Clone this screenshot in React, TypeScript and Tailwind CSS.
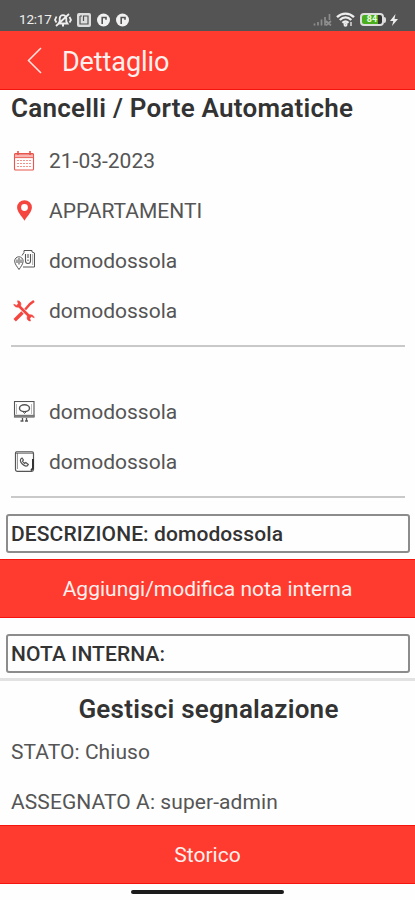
import type { ReactNode } from "react";

const RED = "#ff3b30";

function CalendarIcon() {
  return (
    <svg width="22" height="22" viewBox="0 0 22 22" fill="none" stroke="#e8564e">
      <rect x="1.5" y="3.5" width="19" height="16.5" rx="1" strokeWidth="1.1" />
      <path d="M1.5 4h19v3.6h-19z" fill="#f7b5b1" strokeWidth="0.9" />
      <path d="M5 1v4M17 1v4" strokeWidth="1.6" />
      <path d="M4 10.5h14M4 13.5h14M4 16.5h14" strokeWidth="1.2" strokeDasharray="2 1" strokeOpacity="0.65" />
    </svg>
  );
}

function PinIcon() {
  return (
    <svg width="22" height="22" viewBox="0 0 22 22">
      <path
        d="M11.500 .2a7.400 7.400 0 0 0-7.400 7.400c0 4.100 4.200 8.300 7.400 13.100 3.200-4.800 7.400-9 7.400-13.100A7.400 7.400 0 0 0 11.500 .2zm0 3.900a3.400 3.400 0 1 1 0 6.800 3.400 3.400 0 0 1 0-6.800z"
        fill="#f4463f"
        fillRule="evenodd"
      />
    </svg>
  );
}

function BuildingIcon() {
  return (
    <svg width="24" height="22" viewBox="0 0 24 22" fill="none" stroke="#555" strokeWidth="1">
      <g transform="translate(1 -1)">
        <path d="M8 6.500l2-3V1.500h8V3l2.500 1v14H9" />
        <path d="M5 20.500C3 17.500.7 15 .7 12a4.200 4.200 0 0 1 8.400 0c0 3-2.100 5.500-4.100 8.500z" />
        <path d="M3 10.500v3.500M5 9v6.500M7 10.500v3.500" strokeWidth="1.1" />
        <path d="M11.500 5v7a2.500 2.500 0 0 0 5 0V5M14 5v4M14 10.500v1.500" strokeWidth="1.1" />
        <path d="M18.700 5v11" strokeOpacity="0.5" />
      </g>
    </svg>
  );
}

function ToolsIcon() {
  return (
    <svg width="22" height="22" viewBox="0 0 22 22" fill="none" stroke="#f4463f">
      <path d="M5.500 5.500l11 11" strokeWidth="2.6" />
      <path d="M4.500 .8c3.300 0 4.200 3.500 2.800 5.300-1.500 1.700-6 1.700-6.500-1.900l2.700 1.200 1.700-1.700z" fill="#f4463f" strokeWidth="0.6" />
      <path d="M17.500 21c-3.300 0-4.200-3.300-2.800-5.100 1.500-1.700 6-1.700 6.500 1.900l-2.700-1.200-1.700 1.700z" fill="#f4463f" strokeWidth="0.6" />
      <path d="M21 1l-4 3-4.800 5.500" strokeWidth="2.4" />
      <path d="M9.500 12.500l-7.800 7.800" strokeWidth="3.4" />
    </svg>
  );
}

function MonitorIcon() {
  return (
    <svg width="22" height="22" viewBox="0 0 22 22" fill="none" stroke="#555">
      <rect x="1.500" y="0.500" width="19.500" height="15.5" strokeWidth="1.1" />
      <path d="M1 14.800h20.500" strokeWidth="2" stroke="#777" />
      <path d="M3.500 3v10M18.500 3v10" strokeOpacity="0.4" />
      <ellipse cx="11.500" cy="7.200" rx="5" ry="3.400" strokeWidth="1.4" />
      <path d="M10 10.500l1.500 2 2-2" strokeWidth="1" />
      <path d="M9.500 17v3M13.500 17v3M7.500 20h3M12 20h3" strokeWidth="1.3" />
    </svg>
  );
}

function PhoneBookIcon() {
  return (
    <svg width="22" height="22" viewBox="0 0 22 22" fill="none" stroke="#555">
      <path d="M3.500 .8H19q1.500 0 1.500 1.800v15.900q0 1.800-1.800 1.800H4.500Q2.500 20.300 2.500 18.500V2.500Q2.500.8 3.500.8z" strokeWidth="1.2" />
      <path d="M3 2.500h17M4.500 2v16" strokeWidth="1" strokeOpacity="0.6" />
      <path d="M20 8v9l-2 2.500" strokeWidth="2" stroke="#333" />
      <path d="M9 7c-2.200 1-2.200 3.500.3 6s5 2.800 6 .5l-2.500-2-1.300 1-2-2.200.9-1.300z" strokeWidth="1.2" />
    </svg>
  );
}

function StatusBar() {
  return (
    <div className="flex h-[31px] shrink-0 items-center bg-[#545454] pt-[8px] pl-[19px] pr-[17px] text-[#eee]">
      <span className="w-[34px] text-[13.5px] leading-none tracking-[-0.2px] whitespace-nowrap">12:17</span>
      <svg className="ml-[1px]" width="18" height="16" viewBox="0 0 18 16" fill="none" stroke="#eee" strokeWidth="1.8">
        <path d="M4.500 11.500h9l-1.200-2V6.500a3.300 3.300 0 0 0-6.600 0v3zM8 13.500h2M2 14L15 2M2.500 4.500L1 8l1.500 2.500M15.500 5L17 8l-1.500 2.500" />
      </svg>
      <svg className="ml-[5px]" width="14" height="14" viewBox="0 0 14 14" fill="none">
        <rect width="14" height="14" rx="2" fill="#ddd" />
        <path d="M3 3v8h8V3H6.500v5M3 3h2" stroke="#545454" strokeWidth="1.2" />
      </svg>
      {["left", "right"].map((id) => (
        <svg key={id} className="ml-[6px]" width="13" height="14" viewBox="0 0 13 14">
          <circle cx="6.500" cy="7" r="6.500" fill="#f1f1f1" />
          <path d="M5.200 11V4.500h3.800v2.300" stroke="#545454" strokeWidth="1.6" fill="none" />
        </svg>
      ))}
      <svg className="ml-auto" width="19" height="13" viewBox="0 0 19 13" stroke="#8d8d8d" strokeWidth="1.7" fill="none">
        <path d="M1.500 10.500V12.500M5 9v3.500M8.500 6.500v6M12 4v8.500M16.500 1v6M13 8l5 4.500M18 8l-5 4.500" />
      </svg>
      <svg className="ml-[4px]" width="19" height="15" viewBox="0 0 19 15" stroke="#eee" strokeWidth="2.4" fill="none">
        <path d="M1 5.200c5-4.800 12-4.800 17 0M3.800 8c3.500-3.300 8-3.300 11.500 0M6.500 10.800c2-1.800 4-1.800 6 0" />
        <circle cx="9.500" cy="12.800" r="0.8" />
        <path d="M15 10v4" strokeWidth="1.3" />
      </svg>
      <div className="ml-[5px] flex h-[13px] w-[24px] items-center justify-center rounded-[4px] border-2 border-[#ddd] bg-[linear-gradient(90deg,#4bae1d_80%,#333_80%)] text-[9px] leading-none font-bold text-[#e8ffe0]">
        84
      </div>
      <div className="h-[6px] w-[2px] rounded-r bg-[#ddd]" />
      <svg className="ml-[4px]" width="8" height="12" viewBox="0 0 8 12" fill="#eee">
        <path d="M5.500 0L0 7h3.300L2 12l6-7H4.500z" />
      </svg>
    </div>
  );
}

function Row({ icon, children }: { icon: ReactNode; children: ReactNode }) {
  return (
    <div className="flex h-[50px] items-center pl-[13px]">
      <div className="w-[36px]">{icon}</div>
      <span className="pt-[1px] text-[21px] leading-none text-[#555]">{children}</span>
    </div>
  );
}

function NoteBox({ children }: { children: ReactNode }) {
  return (
    <div className="mr-[5px] ml-[6px] flex h-[39px] items-center rounded-[3px] border-2 border-[#8c8c8c] pt-[2px] pl-[3px] text-[21px] leading-none font-medium tracking-[0.1px]">
      {children}
    </div>
  );
}

function RedButton({ children }: { children: ReactNode }) {
  return (
    <button
      className="flex h-[59px] w-full shrink-0 items-center justify-center border-y border-[#f5150f] pt-[2px] text-[21px] leading-none text-[#fff0ee]"
      style={{ backgroundColor: RED }}
    >
      {children}
    </button>
  );
}

export default function App() {
  return (
    <div className="flex h-[900px] w-[415px] flex-col overflow-hidden bg-[#fefefe] font-[Roboto,sans-serif] text-[#333]">
      <StatusBar />
      <header className="flex h-[59px] shrink-0 items-center border-b border-[#f5150f] pl-[27px] text-[#fff0ee]" style={{ backgroundColor: RED }}>
        <svg width="15" height="28" viewBox="0 0 15 28" fill="none" stroke="#ffe5e2" strokeWidth="1.5">
          <path d="M14 2L1.500 14.500 14 27" />
        </svg>
        <h1 className="ml-[20px] pt-[5px] text-[27px] leading-none tracking-[-0.1px]">Dettaglio</h1>
      </header>

      <h2 className="h-[46px] shrink-0 pt-[5px] pl-[11px] text-[26px] leading-[26px] font-semibold tracking-[0.24px] whitespace-nowrap">
        Cancelli / Porte Automatiche
      </h2>

      <section className="shrink-0">
        <Row icon={<CalendarIcon />}>21-03-2023</Row>
        <Row icon={<PinIcon />}>APPARTAMENTI</Row>
        <Row icon={<BuildingIcon />}>domodossola</Row>
        <Row icon={<ToolsIcon />}>domodossola</Row>
        <hr className="mr-[10px] ml-[11px] mt-[9px] border-t-2 border-[#c9c9c9]" />
      </section>

      <section className="shrink-0 pt-[40px]">
        <Row icon={<MonitorIcon />}>domodossola</Row>
        <Row icon={<PhoneBookIcon />}>domodossola</Row>
        <hr className="mr-[10px] ml-[11px] mt-[9px] border-t-2 border-[#c9c9c9]" />
      </section>

      <section className="shrink-0 pt-[16px]">
        <NoteBox>DESCRIZIONE: domodossola</NoteBox>
        <div className="pt-[6px] pb-[16px]">
          <RedButton>Aggiungi/modifica nota interna</RedButton>
        </div>
        <NoteBox>NOTA INTERNA:</NoteBox>
      </section>

      <section className="mt-[5px] h-[147px] shrink-0 border-t-[3px] border-[#e2e2e2] pl-[11px]">
        <h2 className="pt-[15px] pr-[9px] text-center text-[26px] leading-[26px] font-semibold tracking-[0.24px]">Gestisci segnalazione</h2>
        <p className="pt-[20px] text-[21px] leading-[21px] tracking-[0.05px] text-[#555]">STATO: Chiuso</p>
        <p className="pt-[29px] text-[21px] leading-[21px] tracking-[0.08px] text-[#555]">ASSEGNATO A: super-admin</p>
      </section>

      <RedButton>Storico</RedButton>
      <div className="mx-auto mt-[6px] h-[4px] w-[153px] shrink-0 rounded-full bg-[#1b1b1b]" />
    </div>
  );
}
